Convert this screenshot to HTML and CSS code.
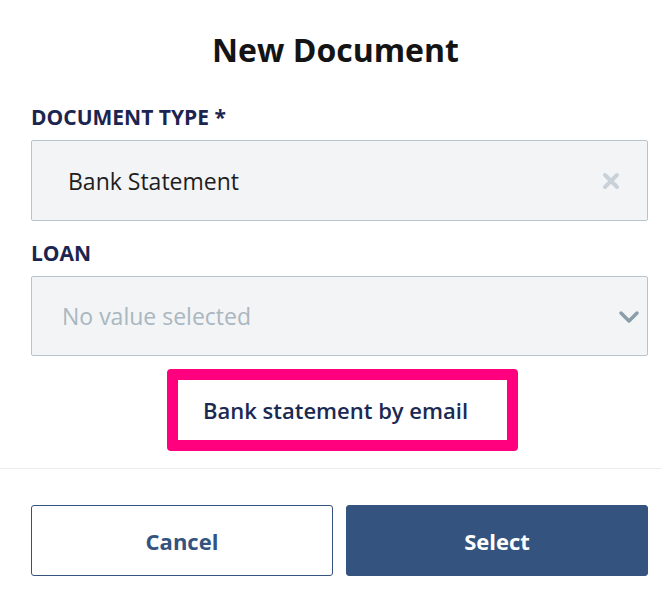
FILE: index.html
```html
<!DOCTYPE html>
<html>
<head>
<meta charset="utf-8">
<link rel="stylesheet" href="styles.css">
</head>
<body>
<div class="dialog">
  <h1 class="title">New Document</h1>
  <div class="content">
    <label class="label">DOCUMENT TYPE *</label>
    <div class="field field-filled">
      <span class="value">Bank Statement</span>
      <svg class="clear" width="18" height="18" viewBox="0 0 18 18"><path d="M3 3 L15 15 M15 3 L3 15" stroke="#c9d2d8" stroke-width="4" stroke-linecap="round"/></svg>
    </div>
    <label class="label">LOAN</label>
    <div class="field field-empty">
      <span class="placeholder">No value selected</span>
      <svg class="chevron" width="22" height="14" viewBox="0 0 22 14"><path d="M3 3 L11 11 L19 3" fill="none" stroke="#8a9ea9" stroke-width="3.5" stroke-linecap="round" stroke-linejoin="round"/></svg>
    </div>
    <div class="link-row">
      <div class="highlight">
        <span class="link">Bank statement by email</span>
      </div>
    </div>
  </div>
  <div class="divider"></div>
  <div class="actions">
    <button class="btn btn-cancel">Cancel</button>
    <button class="btn btn-select">Select</button>
  </div>
</div>
</body>
</html>
```
FILE: styles.css
```css
* { box-sizing: border-box; }
html, body { margin: 0; padding: 0; background: #fff; }
body { font-family: "Open Sans", "Noto Sans", sans-serif; width: 671px; height: 599px; overflow: hidden; }
.dialog { display: flex; flex-direction: column; }
.title {
  margin: 0;
  padding-top: 26px;
  height: 98px;
  text-align: center;
  font-size: 32px;
  font-weight: 700;
  color: #141414;
  line-height: 48px;
}
.content { padding: 0 23px 0 31px; display: flex; flex-direction: column; }
.label {
  font-size: 21px;
  font-weight: 700;
  color: #1b2550;
  line-height: 28px;
  height: 42px;
  padding-top: 5px;
}
.field {
  height: 81px;
  background: #f3f4f6;
  border: 1px solid #b8c4cc;
  border-radius: 2px;
  display: flex;
  align-items: center;
  margin-bottom: 13px;
  justify-content: space-between;
}
.field-filled { padding: 0 27px 0 36px; }
.field-empty { height: 80px; padding: 0 7px 0 30px; }
.value { font-size: 23px; color: #1e1e1e; }
.placeholder { font-size: 23px; color: #a9b7bf; }
.chevron { margin-top: 2px; }
.link-row { display: flex; justify-content: center; padding-left: 6px; }
.highlight {
  width: 351px;
  height: 82px;
  border: 11px solid #ff007f;
  border-radius: 4px;
  display: flex;
  align-items: center;
  padding-left: 25px;
}
.link { font-size: 22px; font-weight: 600; color: #1b2a52; white-space: nowrap; }
.divider { height: 1px; background: #ececec; margin-top: 17px; margin-right: 10px; }
.actions { display: flex; gap: 13px; padding: 36px 23px 0 31px; }
.btn {
  flex: 1;
  height: 71px;
  border-radius: 3px;
  font-family: inherit;
  font-size: 22px;
  font-weight: 700;
}
.btn-cancel { background: #fff; border: 1px solid #34537f; color: #34537f; }
.btn-select { background: #34537f; border: 1px solid #34537f; color: #fff; }
```
